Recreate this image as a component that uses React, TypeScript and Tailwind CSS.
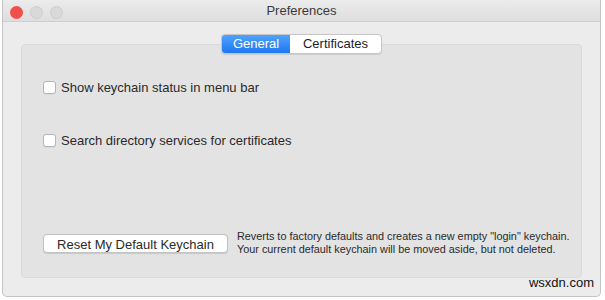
const font = { fontFamily: '"Liberation Sans", Arial, sans-serif' };

function Checkbox({ label }: { label: string }) {
  return (
    <label className="flex items-center gap-[5px] text-[13px] leading-[19px] text-[#2a2a2a]">
      <span className="h-[13px] w-[13px] rounded-[3px] border border-[#b5b5b5] bg-white shadow-[0_0.5px_0.5px_rgba(0,0,0,0.08)]" />
      {label}
    </label>
  );
}

export default function App() {
  return (
    <div className="relative h-[300px] w-[605px] bg-white" style={font}>
      <div className="ml-[2px] flex h-[297px] w-[599px] flex-col overflow-hidden rounded-b-[5px] border-x border-b border-[#c4c4c4] bg-[#ececec]">
        {/* title bar */}
        <div className="relative flex h-[22px] shrink-0 items-center justify-center border-b border-[#cfcfcf] bg-gradient-to-b from-[#ececec] to-[#dedede]">
          <div className="absolute left-[7px] top-[6px] flex gap-[7px]">
            <span className="h-[13px] w-[13px] rounded-full bg-[#f0504c]" />
            <span className="h-[13px] w-[13px] rounded-full border border-[#cdcdcd] bg-[#d9d9d9]" />
            <span className="h-[13px] w-[13px] rounded-full border border-[#cdcdcd] bg-[#d9d9d9]" />
          </div>
          <span className="text-[13px] text-[#3a3a3a]">Preferences</span>
        </div>

        {/* content */}
        <div className="flex flex-col px-[18px] pt-[12px]">
          <div className="relative z-10 flex justify-center">
            <div className="flex h-[20px] overflow-hidden rounded-[4px] border border-[#c6c6c6] bg-white text-[13px] shadow-[0_0.5px_1px_rgba(0,0,0,0.1)]">
              <span className="flex w-[68px] items-center justify-center bg-gradient-to-b from-[#4fa2fb] to-[#1b78f2] text-white">
                General
              </span>
              <span className="flex w-[91px] items-center justify-center text-[#1e1e1e]">
                Certificates
              </span>
            </div>
          </div>
          <div className="-mt-[10px] flex h-[234px] flex-col rounded-[4px] border border-[#dadada] bg-[#e3e3e3] pl-[21px] pt-[33px]">
            <Checkbox label="Show keychain status in menu bar" />
            <div className="mt-[34px]">
              <Checkbox label="Search directory services for certificates" />
            </div>
            <div className="mt-[80px] flex items-center gap-[9px]">
              <button className="h-[19px] w-[185px] rounded-[4px] border border-[#c3c3c3] bg-white text-[13px] text-[#2a2a2a] shadow-[0_0.5px_1px_rgba(0,0,0,0.12)]">
                Reset My Default Keychain
              </button>
              <p className="text-[10.85px] leading-[13px] text-[#2a2a2a]">
                Reverts to factory defaults and creates a new empty "login" keychain.
                <br />
                Your current default keychain will be moved aside, but not deleted.
              </p>
            </div>
          </div>
        </div>
      </div>
      <span className="absolute bottom-[8px] right-[11px] text-[13px] text-[#111]">wsxdn.com</span>
    </div>
  );
}
